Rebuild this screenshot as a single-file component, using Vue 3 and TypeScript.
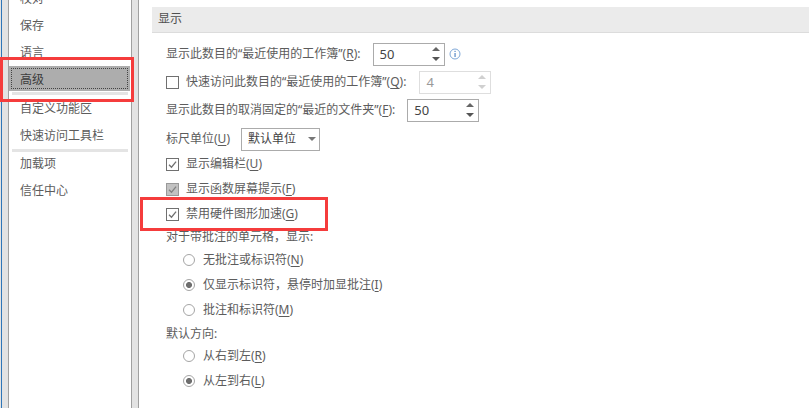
<template>
  <div class="window">
    <div class="edge"></div>
    <nav class="sidebar">
      <template v-for="item in navItems" :key="item.label">
        <div class="nav-item" :class="{ active: item.active }">
          <span class="nav-label">{{ item.label }}</span>
        </div>
        <div v-if="item.sep" class="nav-sep"></div>
      </template>
    </nav>
    <div class="divider"></div>
    <main class="content">
      <h2 class="section">显示</h2>

      <div class="row r1">
        <label>显示此数目的“最近使用的工作簿”(<u>R</u>):</label>
        <div class="spin">
          <span>50</span>
          <i class="arrows"><b class="up"></b><b class="down"></b></i>
        </div>
        <svg class="info" viewBox="0 0 12 12" width="12" height="12">
          <circle cx="6" cy="6" r="5" fill="none" stroke="#7fa8d8" stroke-width="1" />
          <rect x="5.5" y="2.8" width="1.1" height="1.2" fill="#4a7fc0" />
          <rect x="5.5" y="5" width="1.1" height="4" fill="#4a7fc0" />
        </svg>
      </div>

      <div class="row r2">
        <span class="box"></span>
        <label class="after-box">快速访问此数目的“最近使用的工作簿”(<u>Q</u>):</label>
        <div class="spin disabled">
          <span>4</span>
          <i class="arrows"><b class="up"></b><b class="down"></b></i>
        </div>
      </div>

      <div class="row r3">
        <label>显示此数目的取消固定的“最近的文件夹”(<u>F</u>):</label>
        <div class="spin">
          <span>50</span>
          <i class="arrows"><b class="up"></b><b class="down"></b></i>
        </div>
      </div>

      <div class="row r4">
        <label>标尺单位(<u>U</u>)</label>
        <div class="select">
          <span>默认单位</span>
          <b class="down"></b>
        </div>
      </div>

      <div class="row r5">
        <span class="box">
          <svg viewBox="0 0 12 12"><path d="M2.2 6.2 L4.9 9 L9.9 2.8" /></svg>
        </span>
        <label class="after-box">显示编辑栏(<u>U</u>)</label>
      </div>

      <div class="row r6">
        <span class="box off">
          <svg viewBox="0 0 12 12"><path d="M2.2 6.2 L4.9 9 L9.9 2.8" /></svg>
        </span>
        <label class="after-box">显示函数屏幕提示(<u>F</u>)</label>
      </div>

      <div class="row r7">
        <span class="box">
          <svg viewBox="0 0 12 12"><path d="M2.2 6.2 L4.9 9 L9.9 2.8" /></svg>
        </span>
        <label class="after-box">禁用硬件图形加速(<u>G</u>)</label>
      </div>

      <div class="row r8"><label>对于带批注的单元格，显示:</label></div>

      <div class="row radio-row r9">
        <span class="radio"></span>
        <label>无批注或标识符(<u>N</u>)</label>
      </div>
      <div class="row radio-row r10">
        <span class="radio on"></span>
        <label>仅显示标识符，悬停时加显批注(<u>I</u>)</label>
      </div>
      <div class="row radio-row r11">
        <span class="radio"></span>
        <label>批注和标识符(<u>M</u>)</label>
      </div>

      <div class="row r12"><label>默认方向:</label></div>

      <div class="row radio-row r13">
        <span class="radio"></span>
        <label>从右到左(<u>R</u>)</label>
      </div>
      <div class="row radio-row r14">
        <span class="radio on"></span>
        <label>从左到右(<u>L</u>)</label>
      </div>
    </main>

    <div class="mark mark-nav"></div>
    <div class="mark mark-gpu"></div>
  </div>
</template>

<script setup lang="ts">
interface NavItem {
  label: string;
  active?: boolean;
  sep?: boolean;
}

const navItems: NavItem[] = [
  { label: '校对' },
  { label: '保存' },
  { label: '语言' },
  { label: '高级', active: true, sep: true },
  { label: '自定义功能区' },
  { label: '快速访问工具栏', sep: true },
  { label: '加载项' },
  { label: '信任中心' }
];
</script>

<style>
html,
body {
  margin: 0;
  background: #fff;
  overflow: hidden;
}
</style>

<style scoped>
.window {
  position: relative;
  display: flex;
  width: 809px;
  height: 408px;
  overflow: hidden;
  background: #fff;
  font: 12px/18px 'Noto Sans', 'Noto Sans CJK SC', sans-serif;
  color: #5c5c5c;
}

.edge {
  flex: none;
  width: 9px;
  background: #e3e3e3;
  border-left: 1px solid #e3e3e3;
  border-right: 1px solid #a0a0a0;
  box-sizing: border-box;
  box-shadow: inset 1px 0 0 #2f76b8;
}

.sidebar {
  flex: none;
  width: 122px;
  box-sizing: border-box;
  margin-top: -15px;
}

.nav-item {
  height: 27px;
  display: flex;
  align-items: center;
  padding-left: 11px;
}

.nav-item.active {
  height: 25px;
  margin-right: 1px;
  padding-top: 2px;
  box-sizing: border-box;
  background: #adadad;
  color: #3c3c3c;
  outline: 1px dotted #444;
  outline-offset: -3px;
}

.nav-sep {
  height: 3px;
  margin: 0 3px -2px 3px;
  background: #e4e4e4;
}

.nav-item.active + .nav-sep {
  margin-top: 1px;
  margin-bottom: 0;
}

.divider {
  flex: none;
  width: 8px;
  box-sizing: border-box;
  background: #e3e3e3;
  border-left: 1px solid #a0a0a0;
  border-right: 1px solid #a0a0a0;
}

.content {
  flex: 1;
  padding: 7px 0 0 13px;
}

.section {
  margin: 0;
  height: 26px;
  box-sizing: border-box;
  padding-left: 6px;
  background: #ebebeb;
  border-bottom: 1px solid #dcdcdc;
  font-size: 12px;
  font-weight: 400;
  line-height: 24px;
  color: #4f4f4f;
}

.row {
  display: flex;
  align-items: center;
  height: 20px;
  padding-left: 14px;
}

.r1 { margin-top: 11px; }
.r2, .r3 { margin-top: 8px; }
.r4 { margin-top: 9px; }
.r5, .r6, .r7, .r10, .r11, .r14 { margin-top: 5px; }
.r8, .r9 { margin-top: 3px; }
.r12 { margin-top: 4px; }
.r13 { margin-top: 2px; }

.radio-row {
  padding-left: 31px;
}

label {
  white-space: nowrap;
}

u {
  text-underline-offset: 2px;
}

.after-box {
  margin-left: 7px;
}

.spin {
  flex: none;
  position: relative;
  width: 72px;
  height: 23px;
  box-sizing: border-box;
  margin-left: 12px;
  padding-left: 6px;
  border: 1px solid #ababab;
  line-height: 21px;
  font-size: 13px;
  color: #444;
}

.spin.disabled {
  border-color: #dedede;
  color: #999;
  margin-left: 13px;
}

.arrows {
  position: absolute;
  top: 3px;
  right: 4px;
  display: flex;
  flex-direction: column;
  gap: 6px;
}

.up,
.down {
  display: block;
  width: 0;
  height: 0;
  border-left: 4px solid transparent;
  border-right: 4px solid transparent;
}

.up {
  border-bottom: 4px solid #666;
}

.down {
  border-top: 4px solid #555;
}

.disabled .up {
  border-bottom-color: #d0d0d0;
}

.disabled .down {
  border-top-color: #d0d0d0;
}

.info {
  flex: none;
  margin-left: 4px;
}

.select {
  flex: none;
  display: flex;
  align-items: center;
  justify-content: space-between;
  width: 79px;
  height: 23px;
  box-sizing: border-box;
  margin-left: 11px;
  padding: 0 3px 0 6px;
  border: 1px solid #ababab;
  color: #444;
}

.select .down {
  border-top-color: #777;
}

.box {
  flex: none;
  display: block;
  width: 13px;
  height: 13px;
  box-sizing: border-box;
  border: 1px solid #707070;
  background: #fff;
}

.box svg {
  display: block;
  width: 11px;
  height: 11px;
}

.box path {
  fill: none;
  stroke: #707070;
  stroke-width: 1.4;
}

.box.off {
  border-color: #999;
  background: #c2c2c2;
}

.box.off path {
  stroke: #828282;
}

.radio {
  flex: none;
  width: 12px;
  height: 12px;
  box-sizing: border-box;
  margin-right: 8px;
  border: 1px solid #a5a5a5;
  border-radius: 50%;
  background: #fff;
}

.radio.on {
  background: radial-gradient(circle, #6e6e6e 0 2.6px, #fff 3.4px);
}

.mark {
  position: absolute;
  box-sizing: border-box;
  border: 3px solid #f53c3c;
  pointer-events: none;
}

.mark-nav {
  left: 0;
  top: 57px;
  width: 134px;
  height: 45px;
}

.mark-gpu {
  left: 140px;
  top: 197px;
  width: 188px;
  height: 34px;
}
</style>
